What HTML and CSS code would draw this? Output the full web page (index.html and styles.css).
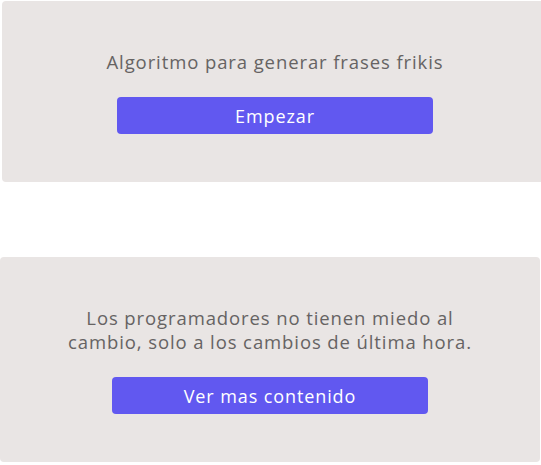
FILE: index.html
```html
<!DOCTYPE html>
<html lang="es">
<head>
<meta charset="utf-8">
<title>Frases frikis</title>
<link rel="stylesheet" href="styles.css">
</head>
<body>
<main class="page">
  <section class="card card-intro">
    <p class="card-text">Algoritmo para generar frases frikis</p>
    <button class="btn" type="button">Empezar</button>
  </section>
  <section class="card card-quote">
    <p class="card-text quote">Los programadores no tienen miedo al cambio, solo a los cambios de última hora.</p>
    <button class="btn" type="button">Ver mas contenido</button>
  </section>
</main>
</body>
</html>
```
FILE: styles.css
```css
html, body {
  margin: 0;
  padding: 0;
  background: #ffffff;
  overflow: hidden;
}

body {
  font-family: "Open Sans", "Liberation Sans", sans-serif;
  width: 541px;
  height: 465px;
}

.page {
  display: flex;
  flex-direction: column;
  align-items: flex-start;
  gap: 75px;
  padding-top: 1px;
}

.card {
  background: #e9e5e4;
  border-radius: 4px;
  display: flex;
  flex-direction: column;
  align-items: center;
  gap: 23px;
  padding: 49px 0 48px;
  box-sizing: border-box;
}

.card-intro {
  width: 546px;
  margin-left: 2px;
}

.card-quote {
  width: 540px;
}

.card-text {
  margin: 0;
  font-size: 18.5px;
  line-height: 24px;
  color: #666363;
  text-align: center;
  letter-spacing: 0.9px;
}

.quote {
  max-width: 430px;
}

.btn {
  width: 316px;
  height: 37px;
  border: none;
  border-radius: 4px;
  background: #6158f0;
  color: #ffffff;
  font-family: inherit;
  font-size: 18px;
  letter-spacing: 0.9px;
  padding: 0;
  cursor: pointer;
}
```
